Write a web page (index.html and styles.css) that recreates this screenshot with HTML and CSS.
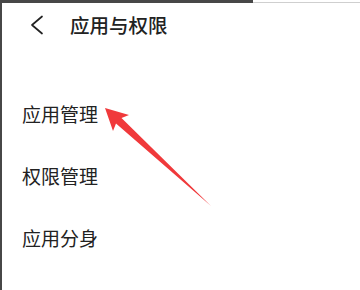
FILE: index.html
```html
<!DOCTYPE html>
<html>
<head>
  <meta charset="utf-8">
  <title>应用与权限</title>
  <link rel="stylesheet" href="styles.css">
</head>
<body>

  <!-- Window edges -->
  <div class="top-edge">
    <div class="top-dark"></div>
    <div class="top-light"></div>
  </div>

  <div class="screen">
    <!-- Header -->
    <div class="header">
      <svg class="back" width="14" height="20" viewBox="0 0 14 20">
        <path d="M12 1.5 L2 10 L12 18.5" fill="none" stroke="#222" stroke-width="1.7" stroke-linecap="round" stroke-linejoin="round"/>
      </svg>
      <div class="title">应用与权限</div>
    </div>

    <!-- Menu -->
    <div class="menu">
      <div class="menu-item">应用管理</div>
      <div class="menu-item">权限管理</div>
      <div class="menu-item">应用分身</div>
    </div>

    <!-- Annotation arrow -->
    <svg class="arrow" width="360" height="290" viewBox="0 0 360 290">
      <polygon points="105,108 129,115 121.5,118 211,206 116,123.5 113,131" fill="#f0393b"/>
    </svg>
  </div>

</body>
</html>
```

FILE: styles.css
```css
body {
  margin: 0;
  padding: 0;
  width: 360px;
  height: 290px;
  overflow: hidden;
  background-color: #fff;
  font-family: "Noto Sans CJK SC", "Noto Sans", sans-serif;
  color: #222;
  position: relative;
}

/* Window edges */
.top-edge {
  display: flex;
  height: 3px;
}

.top-dark {
  width: 253px;
  background-color: #474747;
}

.top-light {
  flex: 1;
  border-bottom: 1px solid #cfcfcf;
}

.screen {
  height: 287px;
  border-left: 2px solid #474747;
  box-sizing: border-box;
}

/* Header */
.header {
  display: flex;
  align-items: center;
  height: 42px;
  padding-left: 28px;
}

.back {
  margin-top: 1px;
}

.title {
  margin-left: 26px;
  font-size: 19.5px;
  font-weight: 500;
}

/* Menu */
.menu {
  padding-top: 38px;
  padding-left: 20px;
}

.menu-item {
  height: 62px;
  line-height: 62px;
  font-size: 19px;
}

/* Annotation arrow */
.arrow {
  position: absolute;
  top: 0;
  left: 0;
  pointer-events: none;
}
```
